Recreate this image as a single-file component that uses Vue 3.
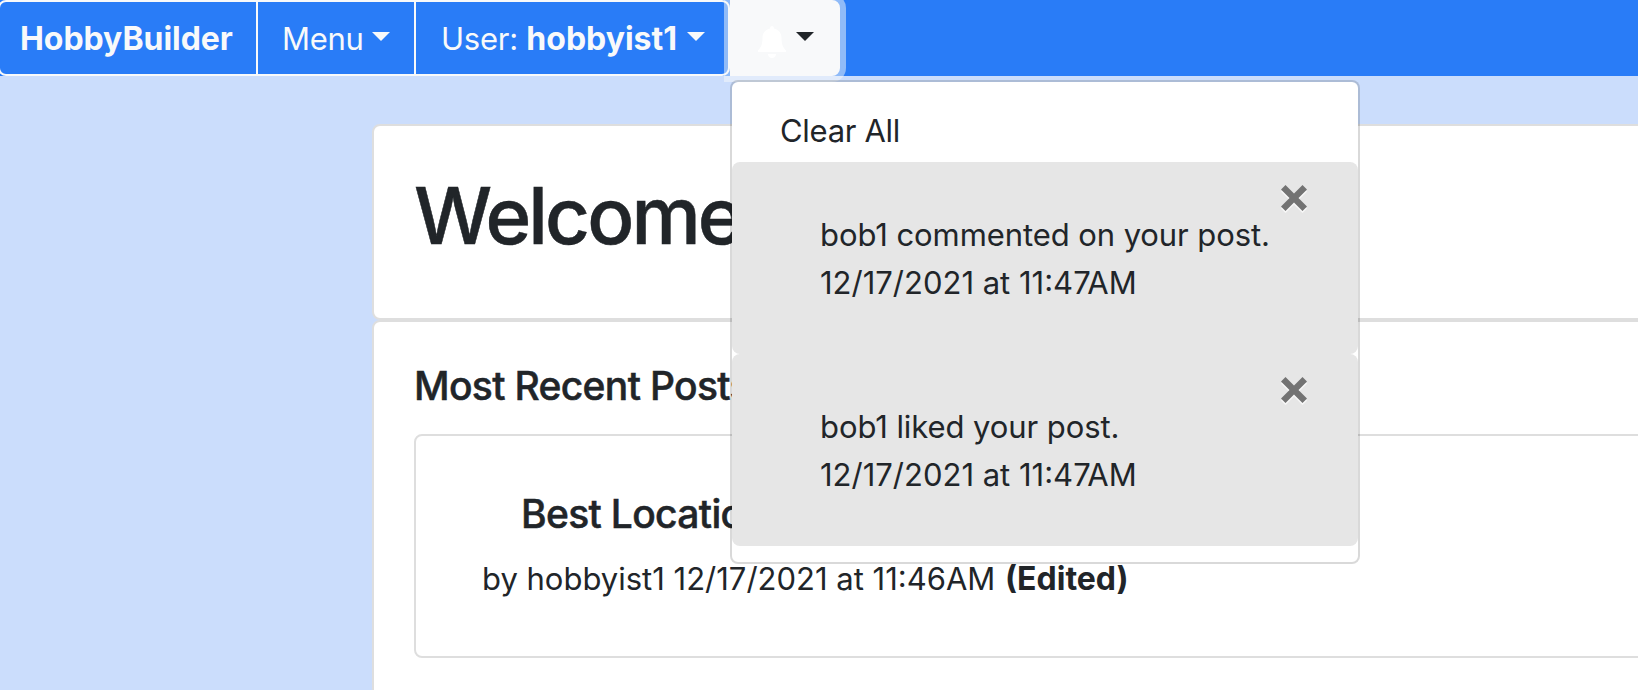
<script setup>
const notifications = [
  { id: 1, text: 'bob1 commented on your post.', date: '12/17/2021 at 11:47AM' },
  { id: 2, text: 'bob1 liked your post.', date: '12/17/2021 at 11:47AM' },
]
</script>

<template>
  <div class="page">
    <nav class="navbar">
      <a class="btn brand">HobbyBuilder</a>
      <button class="btn menu">Menu<span class="caret"></span></button>
      <button class="btn user">User:&nbsp;<b>hobbyist1</b><span class="caret"></span></button>
      <div class="bell-wrap">
        <button class="btn bell" aria-label="Notifications">
          <svg class="bell-icon" viewBox="0 0 28 32">
            <path d="M14 0c1 0 1.900.8 1.900 1.900v.7c4.700 1 7.600 4.600 7.600 9.200 0 7.200 1.700 9.800 4.500 12.800v1.400H0v-1.400c2.800-3 4.500-5.600 4.500-12.800 0-4.600 2.900-8.200 7.600-9.200v-.7C12.100.8 13 0 14 0zM10 28h8c0 2.400-1.800 4-4 4s-4-1.600-4-4z" />
          </svg>
          <span class="caret"></span>
        </button>
        <div class="dropdown">
          <div class="clear">Clear All</div>
          <div v-for="n in notifications" :key="n.id" class="note">
            <div class="note-text">{{ n.text }}</div>
            <div>{{ n.date }}</div>
            <svg class="close" viewBox="0 0 26 28">
              <path class="glow" d="M4.500 2L13 10.500 21.500 2 26 6.500 17.500 15 26 23.500 21.500 28 13 19.500 4.500 28 0 23.500 8.500 15 0 6.500z" />
              <path class="mark" d="M4.500 0L13 8.500 21.500 0 26 4.500 17.500 13 26 21.500 21.500 26 13 17.500 4.500 26 0 21.500 8.500 13 0 4.500z" />
            </svg>
          </div>
        </div>
      </div>
    </nav>

    <main class="content">
      <section class="card welcome"><h1>Welcome</h1></section>
      <section class="card recent">
        <h3>Most Recent Posts</h3>
        <article class="card post">
          <h3 class="title">Best Location</h3>
          <div class="meta">by hobbyist1 12/17/2021 at 11:46AM <b>(Edited)</b></div>
        </article>
      </section>
    </main>
  </div>
</template>

<style>
body {
  margin: 0;
  background: #cbddfc;
}
</style>

<style scoped>
.page {
  height: 690px;
  overflow: hidden;
  background: #cbddfc;
  color: #212529;
  font: 400 31px/48px Inter, "Liberation Sans", sans-serif;
  box-sizing: border-box;
}
.page *,
.page *::before {
  box-sizing: border-box;
}
b {
  font-size: 32px;
  font-weight: 700;
  letter-spacing: 0;
}
h1,
h3 {
  margin: 0;
  font-weight: 500;
  -webkit-text-stroke: 0.5px currentColor;
}
.navbar {
  display: flex;
  height: 76px;
  background: #297cf7;
}
.btn {
  display: flex;
  height: 76px;
  margin: 0;
  padding: 13px 0 0;
  border: 2px solid #f8f9fa;
  background: #297cf7;
  color: #f8f9fa;
  font: inherit;
  white-space: nowrap;
}
.brand {
  width: 260px;
  margin-left: -2px;
  padding-left: 20px;
  border-radius: 8px 0 0 8px;
  font-size: 32px;
  font-weight: 700;
  letter-spacing: -0.05px;
}
.menu {
  width: 160px;
  margin-left: -2px;
  padding-left: 24px;
  letter-spacing: -0.3px;
}
.menu .caret {
  margin-left: 8px;
}
.user {
  width: 316px;
  margin-left: -2px;
  padding-left: 25px;
  letter-spacing: -0.25px;
  border-radius: 0 8px 8px 0;
}
.caret {
  width: 0;
  height: 0;
  margin: 17px 0 0 10px;
  border: 9px solid transparent;
  border-top-color: currentColor;
  border-bottom: 0;
}
.bell-wrap {
  position: relative;
}
.bell {
  width: 110px;
  padding-left: 26px;
  background: #f8f9fa;
  color: #212529;
  border-radius: 0 8px 8px 0;
  box-shadow: 0 0 0 6px rgba(248, 249, 250, 0.5);
}
.bell-icon {
  width: 28px;
  height: 32px;
  margin-top: 11px;
  fill: #fff;
}
.dropdown {
  position: absolute;
  z-index: 2;
  top: 80px;
  left: 0;
  width: 630px;
  padding: 16px 0;
  border: 2px solid rgba(0, 0, 0, 0.15);
  border-radius: 8px;
  background: #fff;
  background-clip: padding-box;
}
.clear {
  height: 64px;
  padding: 9px 48px 0;
  letter-spacing: -0.3px;
}
.note {
  position: relative;
  height: 192px;
  padding: 49px 88px 47px;
  border-radius: 8px;
  background: #e6e6e6;
  white-space: nowrap;
}
.note-text {
  letter-spacing: -0.08px;
}
.close {
  position: absolute;
  top: 23px;
  right: 51px;
  width: 26px;
  height: 28px;
}
.glow {
  fill: #f8f8f8;
}
.mark {
  fill: #737373;
}
.content {
  margin: 48px 0 0 372px;
}
.card {
  border: 2px solid #dedede;
  border-radius: 8px;
  background: #fff;
}
.welcome {
  width: 1380px;
  height: 196px;
  padding: 42px 40px;
}
h1 {
  font-size: 78px;
  line-height: 96px;
  letter-spacing: -2.900px;
}
.recent {
  width: 1380px;
  height: 500px;
  padding: 40px;
}
h3 {
  font-size: 39px;
  line-height: 48px;
  letter-spacing: -0.67px;
}
.post {
  height: 224px;
  margin-top: 24px;
  padding: 54px 66px;
}
.title {
  padding-left: 39px;
}
.meta {
  margin-top: 17px;
  white-space: nowrap;
}
.meta b {
  margin-left: 1px;
}
</style>
